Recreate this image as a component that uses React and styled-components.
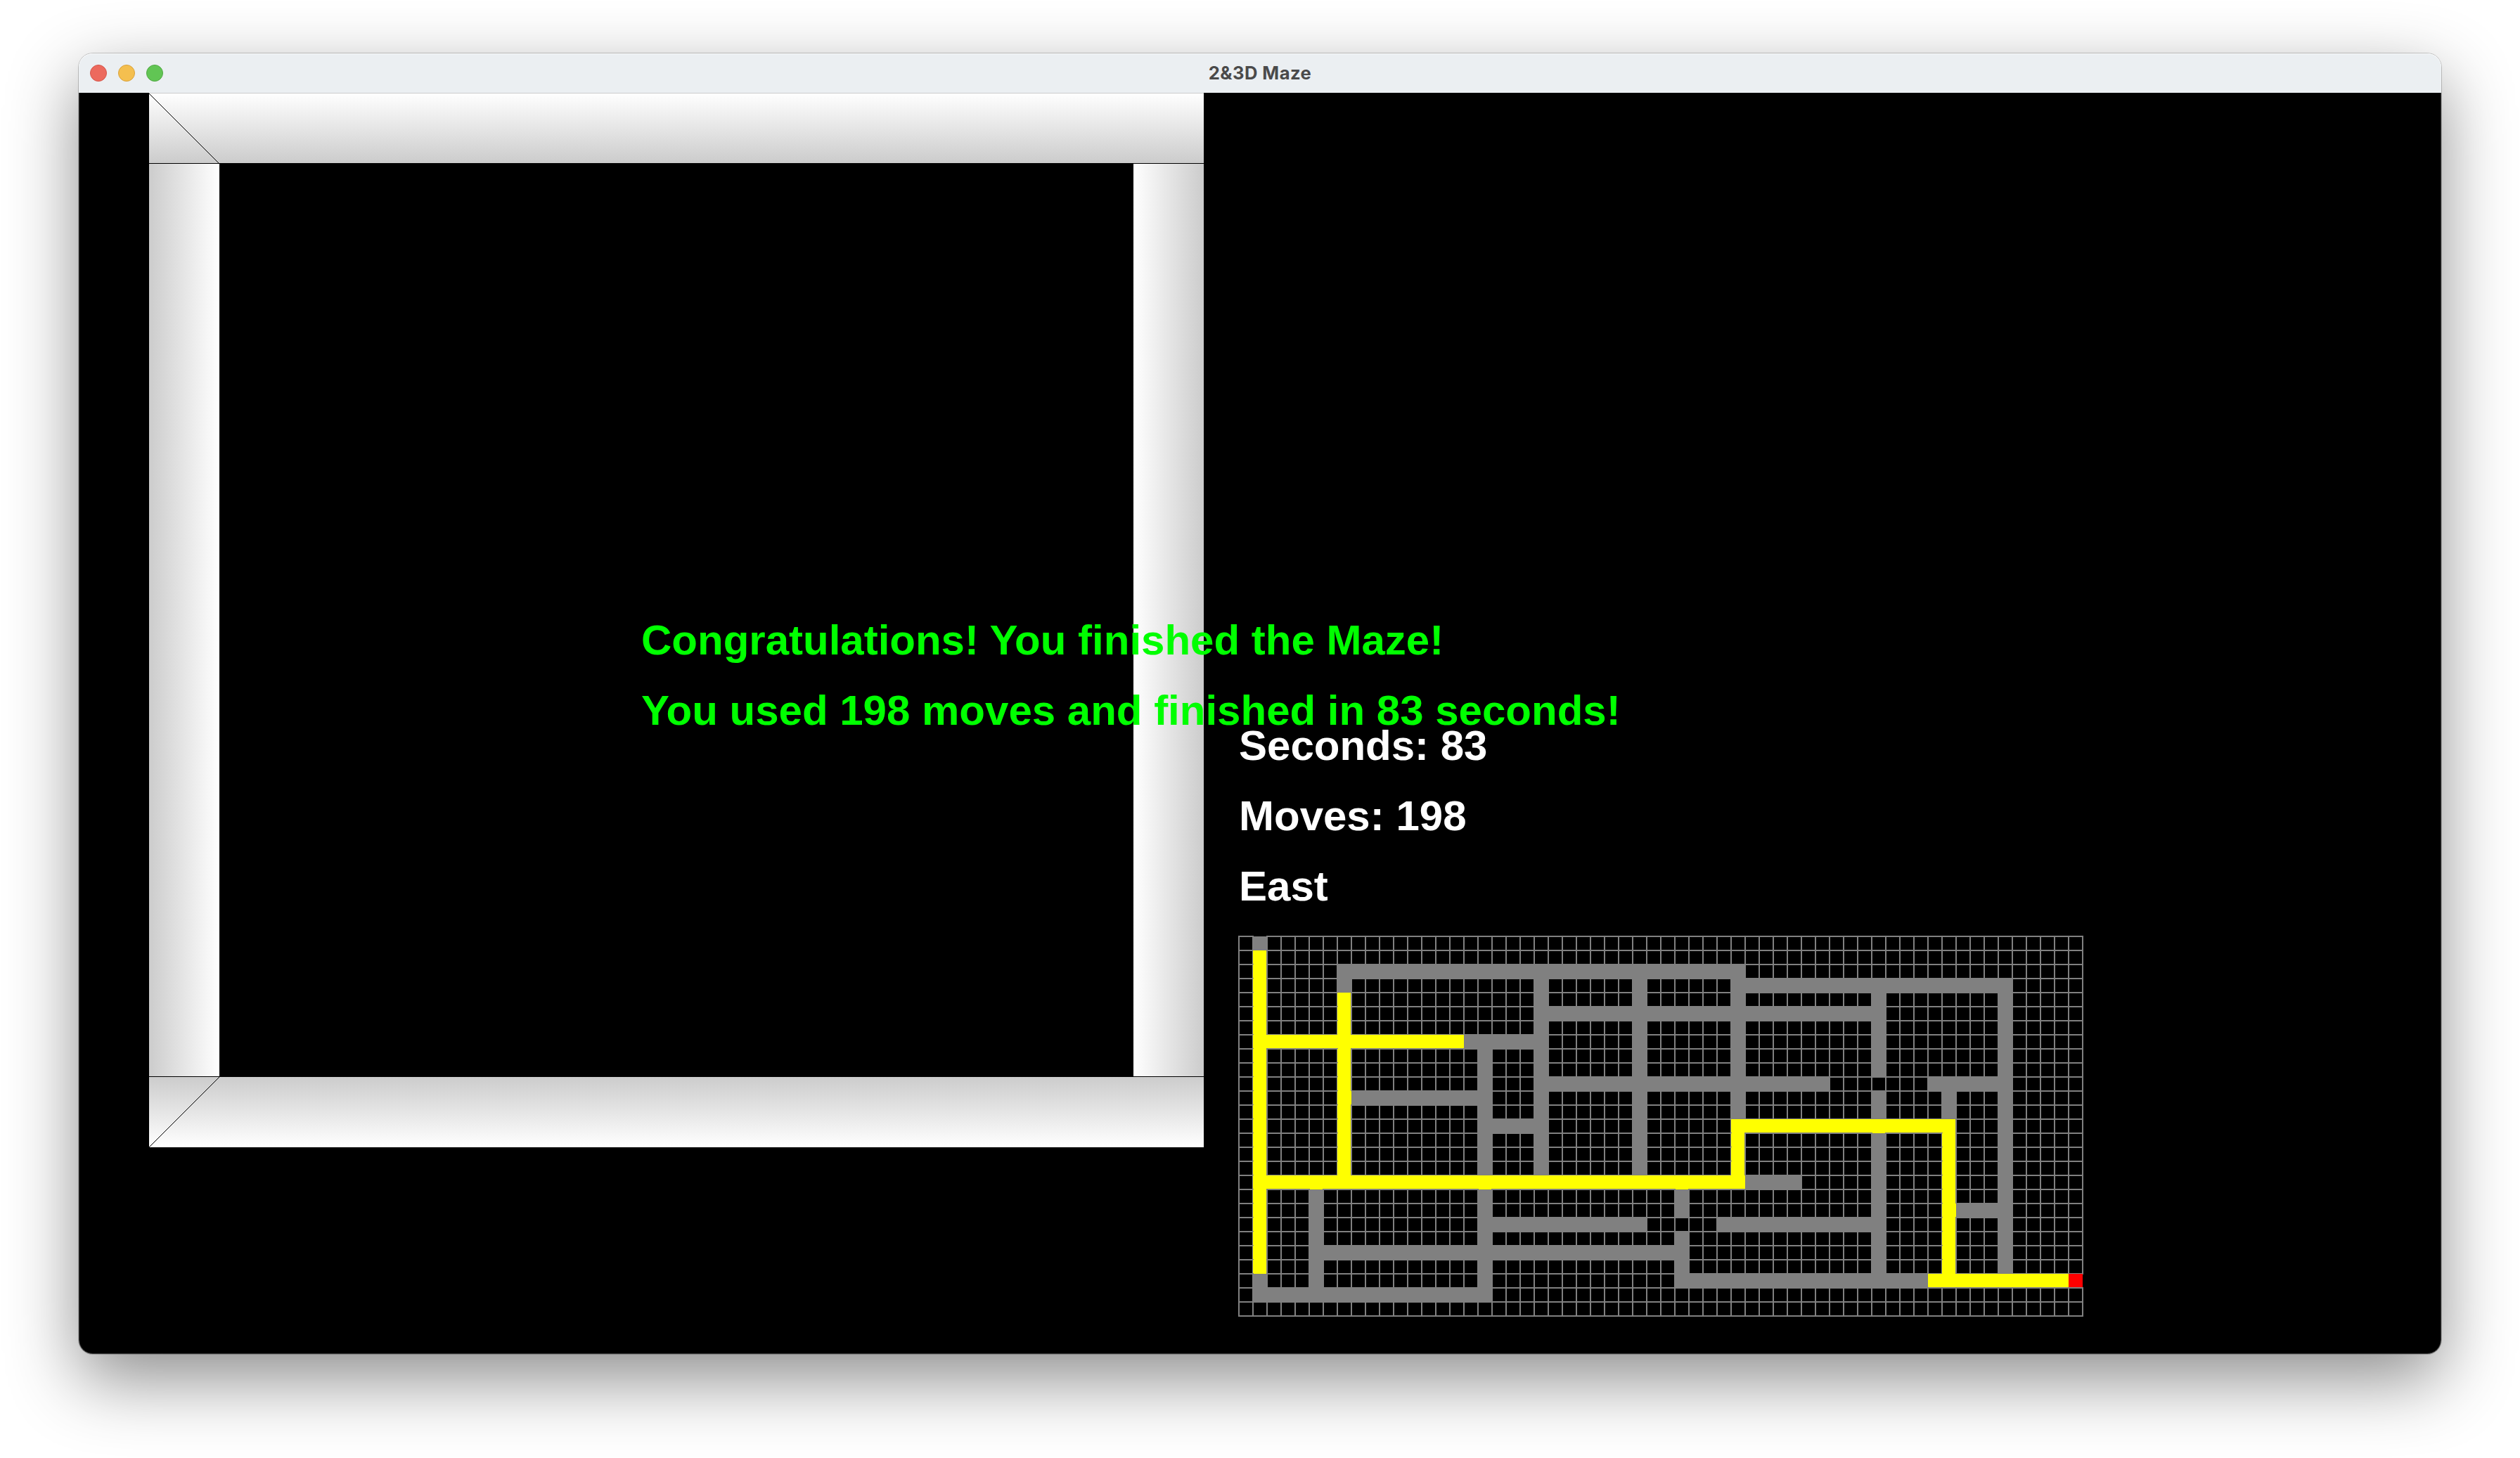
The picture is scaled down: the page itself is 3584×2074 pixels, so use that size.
import React from "react";
import styled, { createGlobalStyle, css } from "styled-components";

const GlobalStyle = createGlobalStyle`
  html, body { margin: 0; padding: 0; background: #fff; }
`;

const Desktop = styled.div`
  box-sizing: border-box;
  width: 3584px;
  height: 2074px;
  padding: 76px 112px 148px;
  overflow: hidden;
  background: #fff;
`;

const Window = styled.main`
  position: relative;
  display: flex;
  flex-direction: column;
  width: 3360px;
  height: 1850px;
  border-radius: 20px;
  box-shadow: 0 0 0 1px rgba(0, 0, 0, 0.2), 0 36px 100px rgba(0, 0, 0, 0.45);

  &::after {
    content: "";
    position: absolute;
    inset: 0;
    border-radius: 20px;
    box-shadow: inset 0 0 0 1px rgba(255, 255, 255, 0.2),
      inset 0 1px 0 rgba(255, 255, 255, 0.6);
    pointer-events: none;
  }
`;

const TitleBar = styled.header`
  display: grid;
  grid-template-columns: 1fr auto 1fr;
  align-items: center;
  height: 56px;
  flex: none;
  border-radius: 20px 20px 0 0;
  background: #ebeff2;
`;

const Lights = styled.div`
  display: flex;
  gap: 16px;
  padding-left: 16px;
`;

const Light = styled.span`
  box-sizing: border-box;
  width: 24px;
  height: 24px;
  border-radius: 50%;
  background: ${(p) => p.$fill};
  border: 1px solid ${(p) => p.$edge};
`;

const Title = styled.h1`
  margin: 0;
  padding-bottom: 1px;
  font: 700 25.6px/55px Inter, "Liberation Sans", sans-serif;
  letter-spacing: 0.45px;
  color: #4a4a4a;
  white-space: nowrap;
`;

const Canvas = styled.section`
  position: relative;
  display: flex;
  align-items: flex-start;
  gap: 50px;
  flex: 1;
  padding-left: 100px;
  border-radius: 0 0 20px 20px;
  background: #000;
`;

const View = styled.div`
  display: grid;
  grid-template: 100px 1300px 100px / 100px 1300px 100px;
  flex: none;
`;

const Slab = styled.div`
  grid-column: 1 / -1;
  background: linear-gradient(${(p) => (p.$floor ? "#ccc, #fff" : "#fff, #ccc")});
  ${(p) => !p.$floor && css`box-shadow: inset 0 1px 0 #ccc;`}
`;

const SideWall = styled.div`
  grid-column: ${(p) => (p.$right ? 3 : 1)};
  border: solid #000;
  border-width: 1px 0;
  background: linear-gradient(to right, ${(p) => (p.$right ? "#fff, #ccc" : "#ccc, #fff")});
`;

const Edge = styled.svg`
  display: block;
  width: 100px;
  height: 100px;
  stroke: #000;
  stroke-width: 1;
  shape-rendering: crispEdges;
`;

const Panel = styled.aside`
  display: flex;
  flex-direction: column;
  padding-top: 879px;
`;

const line = css`
  margin: 0;
  height: 100px;
  font: 700 60px/100px "Liberation Sans", Arial, sans-serif;
  font-kerning: normal;
  font-variant-ligatures: none;
  white-space: nowrap;
`;

const Stat = styled.p`
  ${line}
  color: #fff;
`;

const Banner = styled.div`
  position: absolute;
  left: 800px;
  top: 729px;
`;

const BannerLine = styled.p`
  ${line}
  color: #0f0;
`;

const Map = styled.div`
  display: grid;
  grid-template-columns: repeat(60, 20px);
  grid-auto-rows: 20px;
  margin-top: 21px;
`;

const cellLooks = {
  wall: css`background: #000; box-shadow: inset 0 0 0 1px #808080, 0 0 0 1px #808080;`,
  open: css`background: #808080;`,
  seen: css`background: #ff0;`,
  player: css`background: #f00;`,
};

const Cell = styled.i`
  ${(p) => cellLooks[p.$kind]}
`;

const COLS = 60;
const ROWS = 27;

// [kind, first column, first row, last column, last row]
const corridors = [
  ["open", 1, 0, 1, 25],
  ["open", 1, 25, 17, 25],
  ["open", 7, 2, 7, 17],
  ["open", 7, 2, 35, 2],
  ["open", 16, 7, 21, 7],
  ["open", 17, 7, 17, 25],
  ["open", 8, 11, 17, 11],
  ["open", 17, 13, 21, 13],
  ["open", 21, 2, 21, 17],
  ["open", 21, 5, 45, 5],
  ["open", 28, 2, 28, 17],
  ["open", 35, 2, 35, 17],
  ["open", 35, 3, 54, 3],
  ["open", 54, 3, 54, 24],
  ["open", 21, 10, 41, 10],
  ["open", 49, 10, 54, 10],
  ["open", 45, 3, 45, 9],
  ["open", 45, 11, 45, 24],
  ["open", 50, 10, 50, 24],
  ["open", 36, 17, 39, 17],
  ["open", 5, 17, 5, 25],
  ["open", 17, 20, 28, 20],
  ["open", 34, 20, 45, 20],
  ["open", 5, 22, 31, 22],
  ["open", 31, 17, 31, 19],
  ["open", 31, 21, 31, 24],
  ["open", 31, 24, 59, 24],
  ["open", 51, 19, 54, 19],
  ["seen", 1, 1, 1, 23],
  ["seen", 7, 4, 7, 17],
  ["seen", 1, 7, 15, 7],
  ["seen", 1, 17, 35, 17],
  ["seen", 35, 13, 35, 17],
  ["seen", 35, 13, 50, 13],
  ["seen", 50, 13, 50, 24],
  ["seen", 49, 24, 58, 24],
  ["player", 59, 24, 59, 24],
];

const cells = Array(COLS * ROWS).fill("wall");
corridors.forEach(([kind, x0, y0, x1, y1]) => {
  for (let y = y0; y <= y1; y++) {
    for (let x = x0; x <= x1; x++) cells[y * COLS + x] = kind;
  }
});

const lights = [
  ["#ec6a5e", "#d5564b"],
  ["#f4bf4f", "#d9a23c"],
  ["#61c554", "#51a843"],
];

export default function App() {
  return (
    <Desktop>
      <GlobalStyle />
      <Window>
        <TitleBar>
          <Lights>
            {lights.map(([fill, edge]) => (
              <Light key={fill} $fill={fill} $edge={edge} />
            ))}
          </Lights>
          <Title>2&amp;3D Maze</Title>
        </TitleBar>
        <Canvas>
          <View>
            <Slab>
              <Edge viewBox="0 0 100 100">
                <line x1="0" y1="1" x2="100" y2="101" />
              </Edge>
            </Slab>
            <SideWall />
            <SideWall $right />
            <Slab $floor>
              <Edge viewBox="0 0 100 100">
                <line x1="0" y1="100" x2="100" y2="0" />
              </Edge>
            </Slab>
          </View>
          <Panel>
            <Stat>Seconds: 83</Stat>
            <Stat>Moves: 198</Stat>
            <Stat>East</Stat>
            <Map>
              {cells.map((kind, i) => (
                <Cell key={i} $kind={kind} />
              ))}
            </Map>
          </Panel>
          <Banner>
            <BannerLine>Congratulations! You finished the Maze!</BannerLine>
            <BannerLine>You used 198 moves and finished in 83 seconds!</BannerLine>
          </Banner>
        </Canvas>
      </Window>
    </Desktop>
  );
}
